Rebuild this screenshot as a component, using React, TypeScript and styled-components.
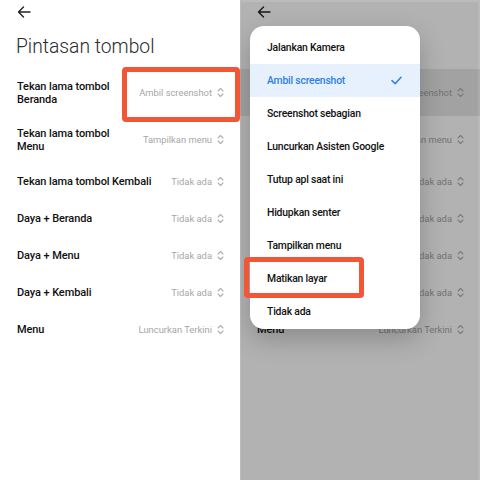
import React from "react";
import styled, { createGlobalStyle } from "styled-components";

const GlobalStyle = createGlobalStyle`
  html, body {
    margin: 0;
    padding: 0;
    background: #ffffff;
  }
  body {
    font-family: Roboto, "Noto Sans", "Liberation Sans", sans-serif;
    -webkit-font-smoothing: antialiased;
  }
`;

type Shortcut = { label: string; value: string };

const shortcuts: Shortcut[] = [
  { label: "Tekan lama tombol Beranda", value: "Ambil screenshot" },
  { label: "Tekan lama tombol Menu", value: "Tampilkan menu" },
  { label: "Tekan lama tombol Kembali", value: "Tidak ada" },
  { label: "Daya + Beranda", value: "Tidak ada" },
  { label: "Daya + Menu", value: "Tidak ada" },
  { label: "Daya + Kembali", value: "Tidak ada" },
  { label: "Menu", value: "Luncurkan Terkini" },
];

const options = [
  "Jalankan Kamera",
  "Ambil screenshot",
  "Screenshot sebagian",
  "Luncurkan Asisten Google",
  "Tutup apl saat ini",
  "Hidupkan senter",
  "Tampilkan menu",
  "Matikan layar",
  "Tidak ada",
];

function BackArrow() {
  return (
    <svg width="14" height="12" viewBox="0 0 14 12" fill="none">
      <path
        d="M13 6H1.5M6.5 1L1.5 6l5 5"
        stroke="#222"
        strokeWidth="1.4"
        strokeLinecap="round"
        strokeLinejoin="round"
      />
    </svg>
  );
}

function UpDown() {
  return (
    <svg width="7" height="11" viewBox="0 0 7 11" fill="none">
      <path
        d="M1 4l2.5-2.5L6 4M1 7l2.5 2.5L6 7"
        stroke="#b0b0b0"
        strokeWidth="1.1"
        strokeLinecap="round"
        strokeLinejoin="round"
      />
    </svg>
  );
}

function Check() {
  return (
    <svg width="11" height="9" viewBox="0 0 11 9" fill="none">
      <path
        d="M1 4.6l3.2 3.1L10 1.3"
        stroke="#2f7fe0"
        strokeWidth="1.5"
        strokeLinecap="round"
        strokeLinejoin="round"
      />
    </svg>
  );
}

function SettingsPage({ pressedRow }: { pressedRow?: number }) {
  return (
    <Page>
      <TopBar>
        <BackArrow />
      </TopBar>
      <Title>Pintasan tombol</Title>
      <List>
        {shortcuts.map((s, i) => (
          <Row key={s.label} $pressed={pressedRow === i}>
            <Label>{s.label}</Label>
            <Value>
              {s.value}
              <UpDown />
            </Value>
          </Row>
        ))}
      </List>
    </Page>
  );
}

export default function App() {
  return (
    <>
      <GlobalStyle />
      <Frame>
        <Screen>
          <SettingsPage />
          <Callout $left={122} $top={67} $width={118} $height={55} />
        </Screen>
        <Screen>
          <SettingsPage pressedRow={0} />
          <Scrim />
          <Menu>
            {options.map((o) => (
              <MenuItem key={o} $selected={o === "Ambil screenshot"}>
                {o}
                {o === "Ambil screenshot" && <Check />}
              </MenuItem>
            ))}
          </Menu>
          <Callout $left={4} $top={257} $width={120} $height={41} />
        </Screen>
      </Frame>
    </>
  );
}

const Frame = styled.div`
  display: grid;
  grid-template-columns: 240px 240px;
  width: 480px;
  height: 480px;
  overflow: hidden;
`;

const Screen = styled.div`
  position: relative;
  height: 480px;
  background: #ffffff;
  overflow: hidden;
`;

const Page = styled.div`
  display: flex;
  flex-direction: column;
`;

const TopBar = styled.div`
  display: flex;
  align-items: center;
  height: 24px;
  padding-left: 17px;
`;

const Title = styled.h1`
  margin: 10px 0 0;
  padding-left: 16px;
  font-size: 19.3px;
  line-height: 25px;
  font-weight: 300;
  color: #2b2b2b;
  height: 35px;
`;

const List = styled.div`
  display: flex;
  flex-direction: column;
`;

const Row = styled.div<{ $pressed?: boolean }>`
  box-sizing: border-box;
  display: flex;
  align-items: center;
  justify-content: space-between;
  gap: 10px;
  min-height: 37px;
  padding: 10.5px 16px 10.5px 17px;
  background: ${(p) => (p.$pressed ? "#e8e8e8" : "transparent")};
`;

const Label = styled.div`
  font-size: 11px;
  line-height: 13px;
  font-weight: 500;
  letter-spacing: -0.1px;
  color: #111;
`;

const Value = styled.div`
  display: flex;
  align-items: center;
  gap: 5px;
  flex: none;
  font-size: 9.4px;
  color: #a6a6a6;
  white-space: nowrap;
`;

const Scrim = styled.div`
  position: absolute;
  inset: 0;
  background: rgba(0, 0, 0, 0.3);
  border-top: 2px solid rgba(255, 255, 255, 0.12);
  border-left: 1px solid rgba(255, 255, 255, 0.12);
  border-right: 2px solid rgba(255, 255, 255, 0.1);
`;

const Menu = styled.div`
  position: absolute;
  left: 10px;
  top: 26px;
  width: 170px;
  padding: 5px 0 1px;
  background: #ffffff;
  border-radius: 14px;
  box-shadow: 0 10px 26px rgba(0, 0, 0, 0.22);
  overflow: hidden;
`;

const MenuItem = styled.div<{ $selected?: boolean }>`
  display: flex;
  align-items: center;
  justify-content: space-between;
  height: 33px;
  padding: 0 18px 0 17px;
  font-size: 10.4px;
  font-weight: 500;
  letter-spacing: -0.2px;
  color: ${(p) => (p.$selected ? "#2f7fe0" : "#111")};
  background: ${(p) => (p.$selected ? "#e6f1fd" : "transparent")};
`;

const Callout = styled.div<{ $left: number; $top: number; $width: number; $height: number }>`
  position: absolute;
  box-sizing: border-box;
  left: ${(p) => p.$left}px;
  top: ${(p) => p.$top}px;
  width: ${(p) => p.$width}px;
  height: ${(p) => p.$height}px;
  border: 5px solid #f25637;
  border-radius: 4px;
`;
